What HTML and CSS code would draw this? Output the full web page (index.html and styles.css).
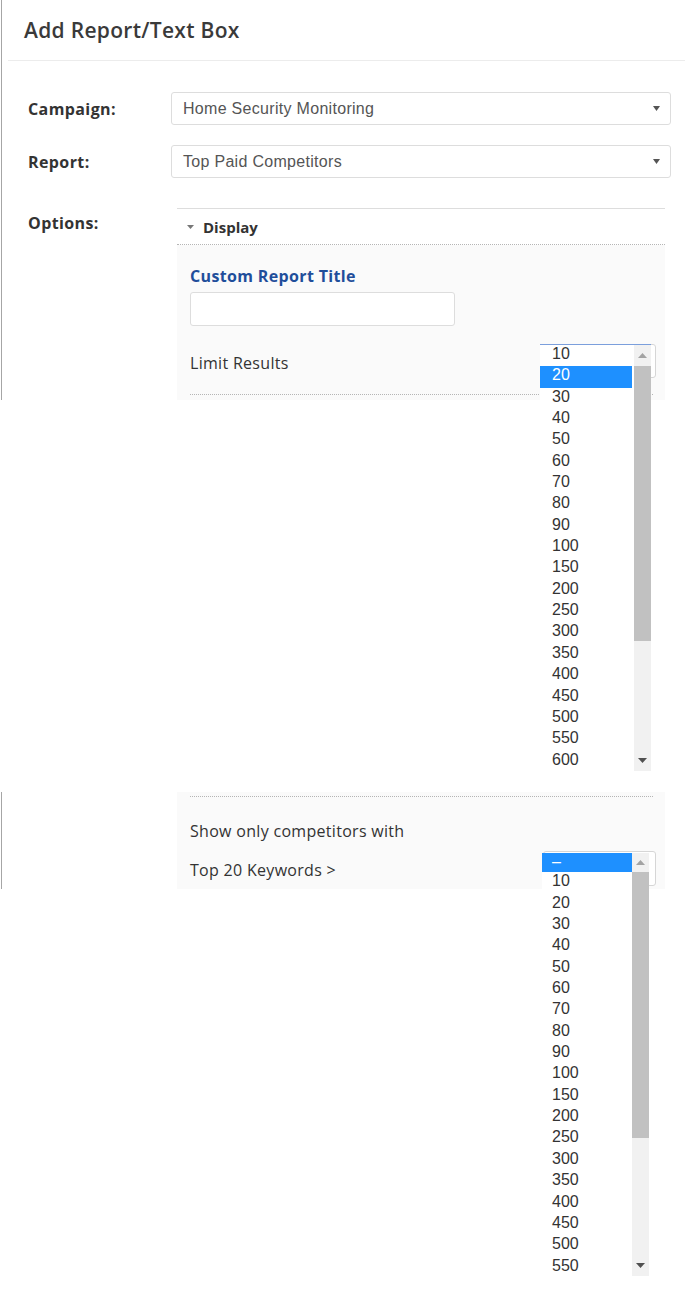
FILE: index.html
```html
<!DOCTYPE html>
<html lang="en">
<head>
<meta charset="utf-8">
<title>Add Report/Text Box</title>
<link rel="stylesheet" href="styles.css">
</head>
<body>
<section class="modal">
  <header class="modal-head"><h1>Add Report/Text Box</h1></header>
  <div class="form">
    <div class="row">
      <label class="row-label">Campaign:</label>
      <div class="select">
        <span>Home Security Monitoring</span>
        <svg class="caret" width="7" height="5" viewBox="0 0 7 5"><path d="M0 0h7L3.5 5z" fill="#555"/></svg>
      </div>
    </div>
    <div class="row">
      <label class="row-label">Report:</label>
      <div class="select">
        <span>Top Paid Competitors</span>
        <svg class="caret" width="7" height="5" viewBox="0 0 7 5"><path d="M0 0h7L3.5 5z" fill="#555"/></svg>
      </div>
    </div>
    <div class="row row-top">
      <label class="row-label row-label-top">Options:</label>
      <div class="panel">
        <div class="panel-head">
          <svg class="tri" width="7" height="4" viewBox="0 0 7 4"><path d="M0 0h7L3.5 4z" fill="#777"/></svg>
          <span>Display</span>
        </div>
        <div class="panel-body">
          <div class="field-title">Custom Report Title</div>
          <div class="text-input"></div>
          <div class="limit-row">
            <span class="limit-label">Limit Results</span>
            <div class="mini-select">
              <div class="listbox lb-one">
                <div class="lb-list">
                  <div class="lb-item">10</div>
                  <div class="lb-item sel">20</div>
                  <div class="lb-item">30</div>
                  <div class="lb-item">40</div>
                  <div class="lb-item">50</div>
                  <div class="lb-item">60</div>
                  <div class="lb-item">70</div>
                  <div class="lb-item">80</div>
                  <div class="lb-item">90</div>
                  <div class="lb-item">100</div>
                  <div class="lb-item">150</div>
                  <div class="lb-item">200</div>
                  <div class="lb-item">250</div>
                  <div class="lb-item">300</div>
                  <div class="lb-item">350</div>
                  <div class="lb-item">400</div>
                  <div class="lb-item">450</div>
                  <div class="lb-item">500</div>
                  <div class="lb-item">550</div>
                  <div class="lb-item">600</div>
                </div>
                <div class="sb">
                  <div class="sb-btn sb-btn-one"><svg width="9" height="5" viewBox="0 0 9 5"><path d="M0 5h9L4.5 0z" fill="#a3a3a3"/></svg></div>
                  <div class="sb-thumb thumb-one"></div>
                  <div class="sb-track"></div>
                  <div class="sb-btn sb-btn-one"><svg width="9" height="5" viewBox="0 0 9 5"><path d="M0 0h9L4.5 5z" fill="#505050"/></svg></div>
                </div>
              </div>
            </div>
          </div>
          <div class="dots"></div>
        </div>
      </div>
    </div>
  </div>
</section>

<section class="modal modal-two">
  <div class="panel-body body-two">
    <div class="dots dots-top"></div>
    <div class="plain-line">Show only competitors with</div>
    <div class="limit-row row-two">
      <span class="limit-label">Top 20 Keywords &gt;</span>
      <div class="mini-select mini-two">
        <div class="listbox lb-two">
          <div class="lb-list list-two">
            <div class="lb-item sel first">–</div>
            <div class="lb-item">10</div>
            <div class="lb-item">20</div>
            <div class="lb-item">30</div>
            <div class="lb-item">40</div>
            <div class="lb-item">50</div>
            <div class="lb-item">60</div>
            <div class="lb-item">70</div>
            <div class="lb-item">80</div>
            <div class="lb-item">90</div>
            <div class="lb-item">100</div>
            <div class="lb-item">150</div>
            <div class="lb-item">200</div>
            <div class="lb-item">250</div>
            <div class="lb-item">300</div>
            <div class="lb-item">350</div>
            <div class="lb-item">400</div>
            <div class="lb-item">450</div>
            <div class="lb-item">500</div>
            <div class="lb-item">550</div>
          </div>
          <div class="sb">
            <div class="sb-btn sb-btn-up2"><svg width="9" height="5" viewBox="0 0 9 5"><path d="M0 5h9L4.5 0z" fill="#a3a3a3"/></svg></div>
            <div class="sb-thumb thumb-two"></div>
            <div class="sb-track"></div>
            <div class="sb-btn sb-btn-one"><svg width="9" height="5" viewBox="0 0 9 5"><path d="M0 0h9L4.5 5z" fill="#505050"/></svg></div>
          </div>
        </div>
      </div>
    </div>
  </div>
</section>
</body>
</html>
```
FILE: styles.css
```css
* { box-sizing: border-box; }

html, body {
  margin: 0;
  padding: 0;
  background: #fff;
  font-family: "Open Sans", "Liberation Sans", sans-serif;
  color: #333;
}

body {
  min-height: 1289px;
}

.modal {
  margin-left: 1px;
  border-left: 1px solid #a6a6a6;
  width: 684px;
}

.modal-head {
  margin-left: 6px;
  height: 61px;
  border-bottom: 1px solid #ececec;
  padding-left: 16px;
  display: flex;
  align-items: center;
}

.modal-head h1 {
  margin: 0;
  font-size: 21px;
  font-weight: 600;
  line-height: 28px;
  letter-spacing: 0.3px;
  color: #3a3a3a;
}

.form {
  padding: 31px 0 0 26px;
}

.row {
  display: flex;
  align-items: center;
}

.row + .row {
  margin-top: 20px;
}

.row.row-top {
  margin-top: 30px;
  align-items: flex-start;
}

.row-label {
  width: 143px;
  font-size: 16px;
  font-weight: 700;
  line-height: 20px;
  letter-spacing: 0.4px;
  color: #333;
}

.row-label-top {
  margin-top: 5px;
}

.select {
  width: 500px;
  height: 33px;
  border: 1px solid #ddd;
  border-radius: 3px;
  background: #fff;
  display: flex;
  align-items: center;
  justify-content: space-between;
  padding: 0 10px 0 11px;
  font-family: "Liberation Sans", Arial, sans-serif;
  font-size: 16px;
  letter-spacing: 0.3px;
  color: #555;
}

.caret { display: block; }

.panel {
  margin-left: 6px;
  width: 488px;
  border-top: 1px solid #ddd;
}

.panel-head {
  height: 36px;
  border-bottom: 1px dotted #b5b5b5;
  display: flex;
  align-items: center;
  padding-left: 10px;
  font-size: 15px;
  font-weight: 700;
  color: #333;
}

.tri {
  display: block;
  margin-right: 9px;
}

.panel-body {
  background: #fafafa;
  padding: 21px 12px 5px 13px;
}

.field-title {
  font-size: 16px;
  font-weight: 700;
  line-height: 20px;
  letter-spacing: 0.35px;
  color: #1f4e9b;
}

.text-input {
  margin-top: 6px;
  width: 265px;
  height: 34px;
  border: 1px solid #ddd;
  border-radius: 3px;
  background: #fff;
}

.limit-row {
  margin-top: 18px;
  display: flex;
  align-items: flex-start;
  justify-content: space-between;
}

.limit-label {
  padding-top: 9px;
  font-size: 16px;
  line-height: 20px;
  letter-spacing: 0.3px;
  color: #333;
}

.mini-select {
  position: relative;
  width: 116px;
  height: 34px;
  margin-right: -3px;
  border: 1px solid #d6d6d6;
  border-radius: 3px;
  background: #fff;
}

.dots {
  margin-top: 16px;
  height: 1px;
  border-top: 1px dotted #b5b5b5;
}

/* open list boxes */
.listbox {
  position: absolute;
  z-index: 5;
  display: flex;
  background: #fff;
  font-family: "Liberation Sans", Arial, sans-serif;
  font-size: 16px;
  color: #333;
}

.lb-one {
  left: -1px;
  top: -1px;
  width: 111px;
  height: 427px;
  border-top: 1px solid #7b9fdc;
}

.lb-list {
  overflow: hidden;
}

.lb-one .lb-list {
  width: 92px;
  margin-right: 2px;
}

.lb-item {
  height: 21.35px;
  line-height: 18px;
  padding-left: 12px;
  white-space: nowrap;
}

.lb-item.sel {
  background: #1e90ff;
  color: #fff;
}

.lb-item.first {
  height: 19.35px;
  line-height: 18px;
}

.sb {
  width: 17px;
  display: flex;
  flex-direction: column;
  background: #f1f1f1;
}

.sb-btn {
  display: flex;
  align-items: center;
  justify-content: center;
  flex: none;
}

.sb-btn svg { display: block; }

.sb-btn-one { height: 21px; }
.sb-btn-up2 { height: 19px; }

.sb-thumb {
  background: #c1c1c1;
  flex: none;
}

.thumb-one { height: 275px; }
.thumb-two { height: 266px; }

.sb-track { flex: 1; }

/* second part */
.modal-two {
  margin-top: 392px;
  padding-left: 175px;
}

.body-two {
  width: 488px;
  padding: 4px 12px 3px 13px;
}

.dots-top {
  margin-top: 0;
}

.plain-line {
  margin-top: 24px;
  font-size: 16px;
  line-height: 20px;
  letter-spacing: 0.3px;
  color: #333;
}

.row-two {
  margin-top: 10px;
}

.mini-two {
  width: 113px;
  height: 35px;
}

.lb-two {
  left: -2px;
  top: 1px;
  width: 107px;
  height: 423px;
}

.list-two {
  width: 90px;
}

.list-two .lb-item {
  padding-left: 10px;
}
```
